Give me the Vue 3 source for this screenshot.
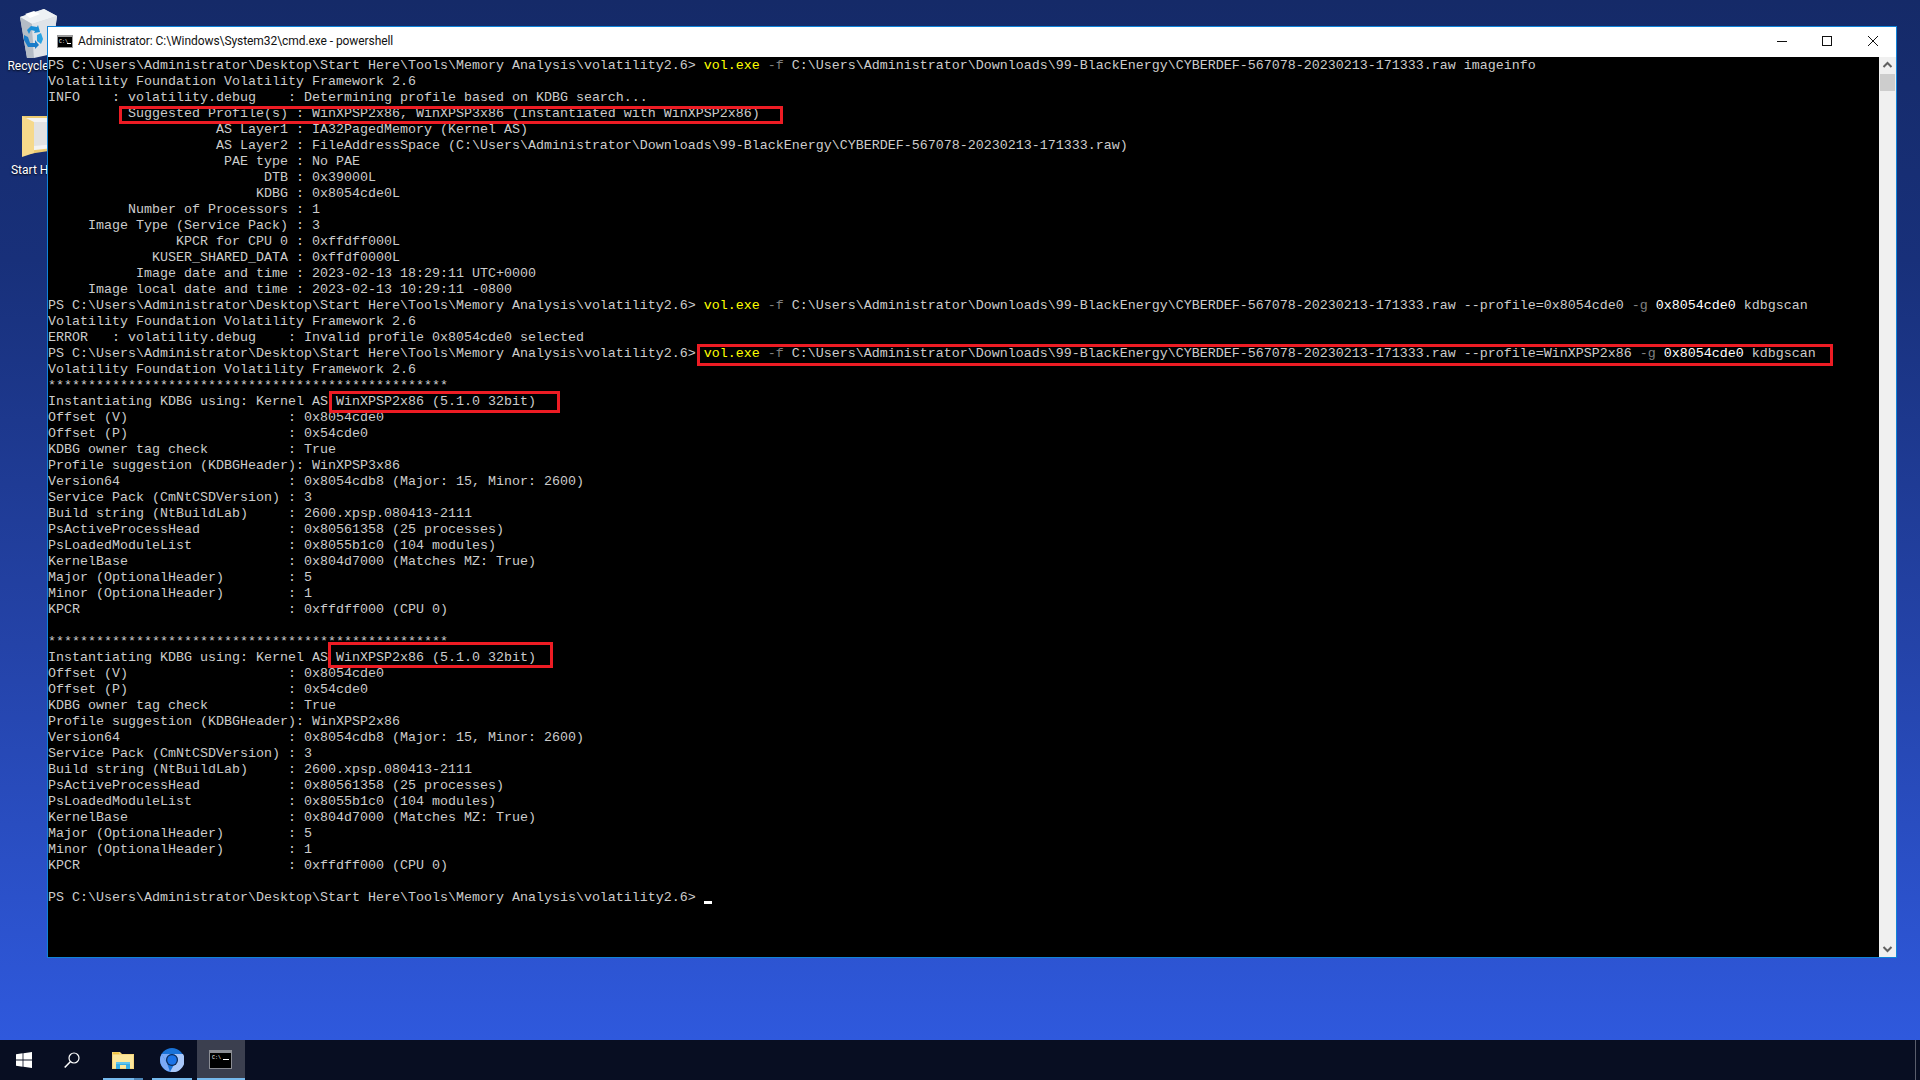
<script setup>
const PROMPT = 'PS C:\\Users\\Administrator\\Desktop\\Start Here\\Tools\\Memory Analysis\\volatility2.6> '
const RAW = 'C:\\Users\\Administrator\\Downloads\\99-BlackEnergy\\CYBERDEF-567078-20230213-171333.raw'

const plain = (t) => [[t, '']]
const info = (label, value) => plain(label.padStart(30) + ' : ' + value)
const kv = (label, value) => plain(label.padEnd(30) + ': ' + value)

const scanBlock = (suggestion) => [
  plain('*'.repeat(50)),
  plain('Instantiating KDBG using: Kernel AS WinXPSP2x86 (5.1.0 32bit)'),
  kv('Offset (V)', '0x8054cde0'),
  kv('Offset (P)', '0x54cde0'),
  kv('KDBG owner tag check', 'True'),
  plain('Profile suggestion (KDBGHeader): ' + suggestion),
  kv('Version64', '0x8054cdb8 (Major: 15, Minor: 2600)'),
  kv('Service Pack (CmNtCSDVersion)', '3'),
  kv('Build string (NtBuildLab)', '2600.xpsp.080413-2111'),
  kv('PsActiveProcessHead', '0x80561358 (25 processes)'),
  kv('PsLoadedModuleList', '0x8055b1c0 (104 modules)'),
  kv('KernelBase', '0x804d7000 (Matches MZ: True)'),
  kv('Major (OptionalHeader)', '5'),
  kv('Minor (OptionalHeader)', '1'),
  kv('KPCR', '0xffdff000 (CPU 0)'),
]

const lines = [
  [[PROMPT, ''], ['vol.exe', 'yel'], [' -f ', 'dim'], [RAW + ' imageinfo', '']],
  plain('Volatility Foundation Volatility Framework 2.6'),
  plain('INFO    : volatility.debug    : Determining profile based on KDBG search...'),
  info('Suggested Profile(s)', 'WinXPSP2x86, WinXPSP3x86 (Instantiated with WinXPSP2x86)'),
  info('AS Layer1', 'IA32PagedMemory (Kernel AS)'),
  info('AS Layer2', 'FileAddressSpace (' + RAW + ')'),
  info('PAE type', 'No PAE'),
  info('DTB', '0x39000L'),
  info('KDBG', '0x8054cde0L'),
  info('Number of Processors', '1'),
  info('Image Type (Service Pack)', '3'),
  info('KPCR for CPU 0', '0xffdff000L'),
  info('KUSER_SHARED_DATA', '0xffdf0000L'),
  info('Image date and time', '2023-02-13 18:29:11 UTC+0000'),
  info('Image local date and time', '2023-02-13 10:29:11 -0800'),
  [[PROMPT, ''], ['vol.exe', 'yel'], [' -f ', 'dim'], [RAW + ' --profile=0x8054cde0 ', ''], ['-g ', 'dim'], ['0x8054cde0', 'num'], [' kdbgscan', '']],
  plain('Volatility Foundation Volatility Framework 2.6'),
  plain('ERROR   : volatility.debug    : Invalid profile 0x8054cde0 selected'),
  [[PROMPT, ''], ['vol.exe', 'yel'], [' -f ', 'dim'], [RAW + ' --profile=WinXPSP2x86 ', ''], ['-g ', 'dim'], ['0x8054cde0', 'num'], [' kdbgscan', '']],
  plain('Volatility Foundation Volatility Framework 2.6'),
  ...scanBlock('WinXPSP3x86'),
  plain(' '),
  ...scanBlock('WinXPSP2x86'),
  plain(' '),
  [[PROMPT, ''], ['', 'cursor']],
]
</script>

<template>
  <div class="screen">
    <main class="desktop">
      <div class="desk-icon bin">
        <svg width="38" height="50" viewBox="0 0 38 50">
          <path d="M1 9 L25 1 L38 8 L33 46 L8 50 Z" fill="#cfd5db" />
          <path d="M1 9 L25 1 L38 8 L13 16 Z" fill="#eef1f4" />
          <path d="M1 9 L13 16 L15 50 L8 50 Z" fill="#b4bcc6" />
          <path d="M13 16 L38 8 L33 46 L15 50 Z" fill="#dfe3e8" />
          <path d="M6 6 L15 3 L21 6 L11 10 Z" fill="#ffffff" />
          <path d="M8 22 L12 18 L18 19 L19 17 L21 24 L15 25 L16 23 L12 22 L10 26 Z" fill="#1c8fd6" />
          <path d="M5 27 L9 29 L11 35 L16 35 L16 32 L20 37 L16 41 L16 39 L9 39 L5 32 Z" fill="#1a7cc8" />
          <path d="M18 27 L22 25 L24 31 L22 36 L18 33 Z" fill="#2aa3e2" />
        </svg>
        <span class="desk-label">Recycle Bin</span>
      </div>
      <div class="desk-icon folder">
        <svg width="42" height="42" viewBox="0 0 42 42">
          <path d="M0 0 H40 V33 L0 39 Z" fill="#eccb72" />
          <path d="M4 2 H40 V31 L4 35 Z" fill="#f3f3f3" />
          <path d="M12 6 H34 V28 L12 30 Z" fill="#e2e2e2" />
          <path d="M0 0 L12 6 V37 L0 41 Z" fill="#f6d98b" />
        </svg>
        <span class="desk-label">Start Here</span>
      </div>

      <section class="window">
        <header class="titlebar">
          <svg class="title-icon" width="16" height="13" viewBox="0 0 16 13">
            <rect width="16" height="13" fill="#9a9a9a" />
            <rect x="1" y="2" width="14" height="10" fill="#000" />
            <text x="2" y="8" class="mini">C:\</text>
            <rect x="10" y="8" width="4" height="1" fill="#fff" />
          </svg>
          <span class="title-text">Administrator: C:\Windows\System32\cmd.exe - powershell</span>
          <div class="controls">
            <svg width="46" height="30" viewBox="0 0 46 30"><path d="M19 14.5 H29" stroke="#111" /></svg>
            <svg width="46" height="30" viewBox="0 0 46 30"><rect x="18.5" y="9.5" width="9" height="9" fill="none" stroke="#111" /></svg>
            <svg width="46" height="30" viewBox="0 0 46 30"><path d="M18 9 L28 19 M28 9 L18 19" stroke="#111" /></svg>
          </div>
        </header>
        <div class="body">
          <div class="console">
            <div v-for="(line, i) in lines" :key="i" class="line"><span v-for="(seg, j) in line" :key="j" :class="seg[1]">{{ seg[0] }}</span></div>
            <i class="mark m1"></i>
            <i class="mark m2"></i>
            <i class="mark m3"></i>
            <i class="mark m4"></i>
          </div>
          <aside class="scrollbar">
            <svg width="17" height="17" viewBox="0 0 17 17"><path d="M4.5 10 L8.5 6 L12.5 10" fill="none" stroke="#606060" stroke-width="2" /></svg>
            <div class="thumb"></div>
            <div class="track"></div>
            <svg width="17" height="17" viewBox="0 0 17 17"><path d="M4.5 7 L8.5 11 L12.5 7" fill="none" stroke="#606060" stroke-width="2" /></svg>
          </aside>
        </div>
      </section>
    </main>

    <footer class="taskbar">
      <div class="tb-plain">
        <svg width="16" height="16" viewBox="0 0 16 16">
          <path d="M0 2.3 L6.6 1.3 V7.6 H0 Z M7.4 1.2 L16 0 V7.6 H7.4 Z M0 8.4 H6.6 V14.7 L0 13.7 Z M7.4 8.4 H16 V16 L7.4 14.8 Z" fill="#fff" />
        </svg>
      </div>
      <div class="tb-plain">
        <svg width="16" height="16" viewBox="0 0 16 16">
          <circle cx="10" cy="6" r="5" fill="none" stroke="#fff" stroke-width="1.2" />
          <path d="M6.3 9.7 L0.7 15.5" stroke="#fff" stroke-width="1.5" />
        </svg>
      </div>
      <div class="tb-app explorer">
        <svg width="22" height="18" viewBox="0 0 22 18">
          <path d="M0 1 H8 L10 3 H22 V18 H0 Z" fill="#f6d67d" />
          <path d="M1 4 H21 V17 H1 Z" fill="#fde79c" />
          <path d="M1 1.5 H7 V3 H1 Z" fill="#f2c53d" />
          <path d="M4 12 V18 H8 V14 H14 V18 H18 V12 Z" fill="#37aee6" />
          <path d="M4 11 H18 V13 H4 Z" fill="#5fc4ef" />
        </svg>
      </div>
      <div class="tb-app chromium">
        <svg width="24" height="24" viewBox="0 0 24 24">
          <circle cx="12" cy="12" r="12" fill="#1a73d8" />
          <path d="M12 6 H23 A12 12 0 0 1 10 23.8 L15 15 A6 6 0 0 0 18 12 A6 6 0 0 0 12 6 Z" fill="#a8c7fa" />
          <path d="M1.6 6 L7 15 A6 6 0 0 1 12 6 Z" fill="#7baaf7" />
          <path d="M1.6 6 L7 15 L10 23.8 A12 12 0 0 1 1.6 6 Z" fill="#7baaf7" />
          <circle cx="12" cy="12" r="6" fill="#0e2a55" />
          <circle cx="12" cy="12" r="4.8" fill="#1a73e8" />
        </svg>
      </div>
      <div class="tb-app cmd">
        <svg width="24" height="20" viewBox="0 0 24 20">
          <rect width="23" height="19" fill="#8b8d94" />
          <rect x="1" y="3" width="21" height="15" fill="#000" />
          <text x="3" y="9" class="mini">C:\</text>
          <rect x="14" y="9" width="6" height="1" fill="#fff" />
        </svg>
      </div>
      <div class="show-desktop"></div>
    </footer>
  </div>
</template>

<style scoped>
.screen {
  width: 1920px;
  height: 1080px;
  display: flex;
  flex-direction: column;
  overflow: hidden;
  font-family: Roboto, "Noto Sans", sans-serif;
}
.desktop {
  position: relative;
  flex: 1;
  background: linear-gradient(180deg, #152a68 0%, #18307a 25%, #2443a8 62%, #2f59dd 100%);
}
.desk-icon {
  position: absolute;
  width: 76px;
  display: flex;
  flex-direction: column;
  align-items: center;
}
.bin { left: 0; top: 8px; }
.folder { left: 0; top: 116px; }
.folder svg { margin-left: 10px; }
.desk-label {
  color: #fff;
  font-size: 12px;
  line-height: 16px;
  text-shadow: 0 1px 2px #000;
  white-space: nowrap;
}
.folder .desk-label { margin-top: 4px; }

.window {
  position: absolute;
  left: 47px;
  top: 26px;
  width: 1850px;
  height: 932px;
  box-sizing: border-box;
  border: 1px solid #1083d8;
  display: flex;
  flex-direction: column;
  background: #000;
}
.titlebar {
  height: 30px;
  flex: none;
  background: #fff;
  display: flex;
  align-items: center;
  padding-left: 9px;
}
.title-icon { flex: none; margin-top: -2px; }
.title-text {
  margin-left: 5px;
  margin-top: -2px;
  font-size: 12px;
  letter-spacing: -0.07px;
  color: #111;
  white-space: nowrap;
}
.controls {
  margin-left: auto;
  display: flex;
}
.controls svg { display: block; }
.body {
  flex: 1;
  display: flex;
  min-height: 0;
}
.console {
  position: relative;
  flex: 1;
  overflow: hidden;
  background: #000;
  padding-top: 1px;
  color: #cccccc;
  font-family: "Liberation Mono", "DejaVu Sans Mono", monospace;
  font-size: 13.33px;
}
.line {
  height: 16px;
  line-height: 16px;
  white-space: pre;
}
.yel { color: #ffff00; }
.dim { color: #808080; }
.num { color: #ffffff; }
.cursor {
  display: inline-block;
  width: 8px;
  height: 3px;
  background: #fff;
  vertical-align: -3px;
}
.mark {
  position: absolute;
  box-sizing: border-box;
  border: 3px solid #ed1c24;
  pointer-events: none;
}
.m1 { left: 71px; top: 49px; width: 664px; height: 18px; }
.m2 { left: 649px; top: 287px; width: 1136px; height: 22px; }
.m3 { left: 281px; top: 334px; width: 231px; height: 22px; }
.m4 { left: 280px; top: 585px; width: 225px; height: 26px; }

.scrollbar {
  width: 17px;
  flex: none;
  background: #f0f0f0;
  display: flex;
  flex-direction: column;
}
.scrollbar svg { display: block; flex: none; }
.thumb {
  height: 17px;
  margin: 0 1px;
  background: #cdcdcd;
}
.track { flex: 1; }

.taskbar {
  height: 40px;
  flex: none;
  background: #080e22;
  display: flex;
  align-items: stretch;
}
.tb-plain {
  width: 48px;
  display: flex;
  align-items: center;
  justify-content: center;
}
.tb-app {
  position: relative;
  display: flex;
  align-items: center;
  justify-content: center;
}
.tb-app::after {
  content: "";
  position: absolute;
  left: 0;
  right: 0;
  bottom: 0;
  height: 2px;
  background: #76b9ed;
}
.explorer { width: 40px; margin-left: 7px; }
.explorer::before {
  content: "";
  position: absolute;
  right: 0;
  bottom: 0;
  width: 9px;
  height: 2px;
  background: #4c86b8;
  z-index: 1;
}
.chromium { width: 40px; margin-left: 9px; }
.cmd { width: 48px; margin-left: 5px; background: #3b3f4f; }
.show-desktop {
  margin-left: auto;
  margin-right: 4px;
  width: 1px;
  background: #5a5e6c;
}
.mini {
  font-family: "Liberation Mono", monospace;
  font-size: 5px;
  fill: #fff;
}
</style>
